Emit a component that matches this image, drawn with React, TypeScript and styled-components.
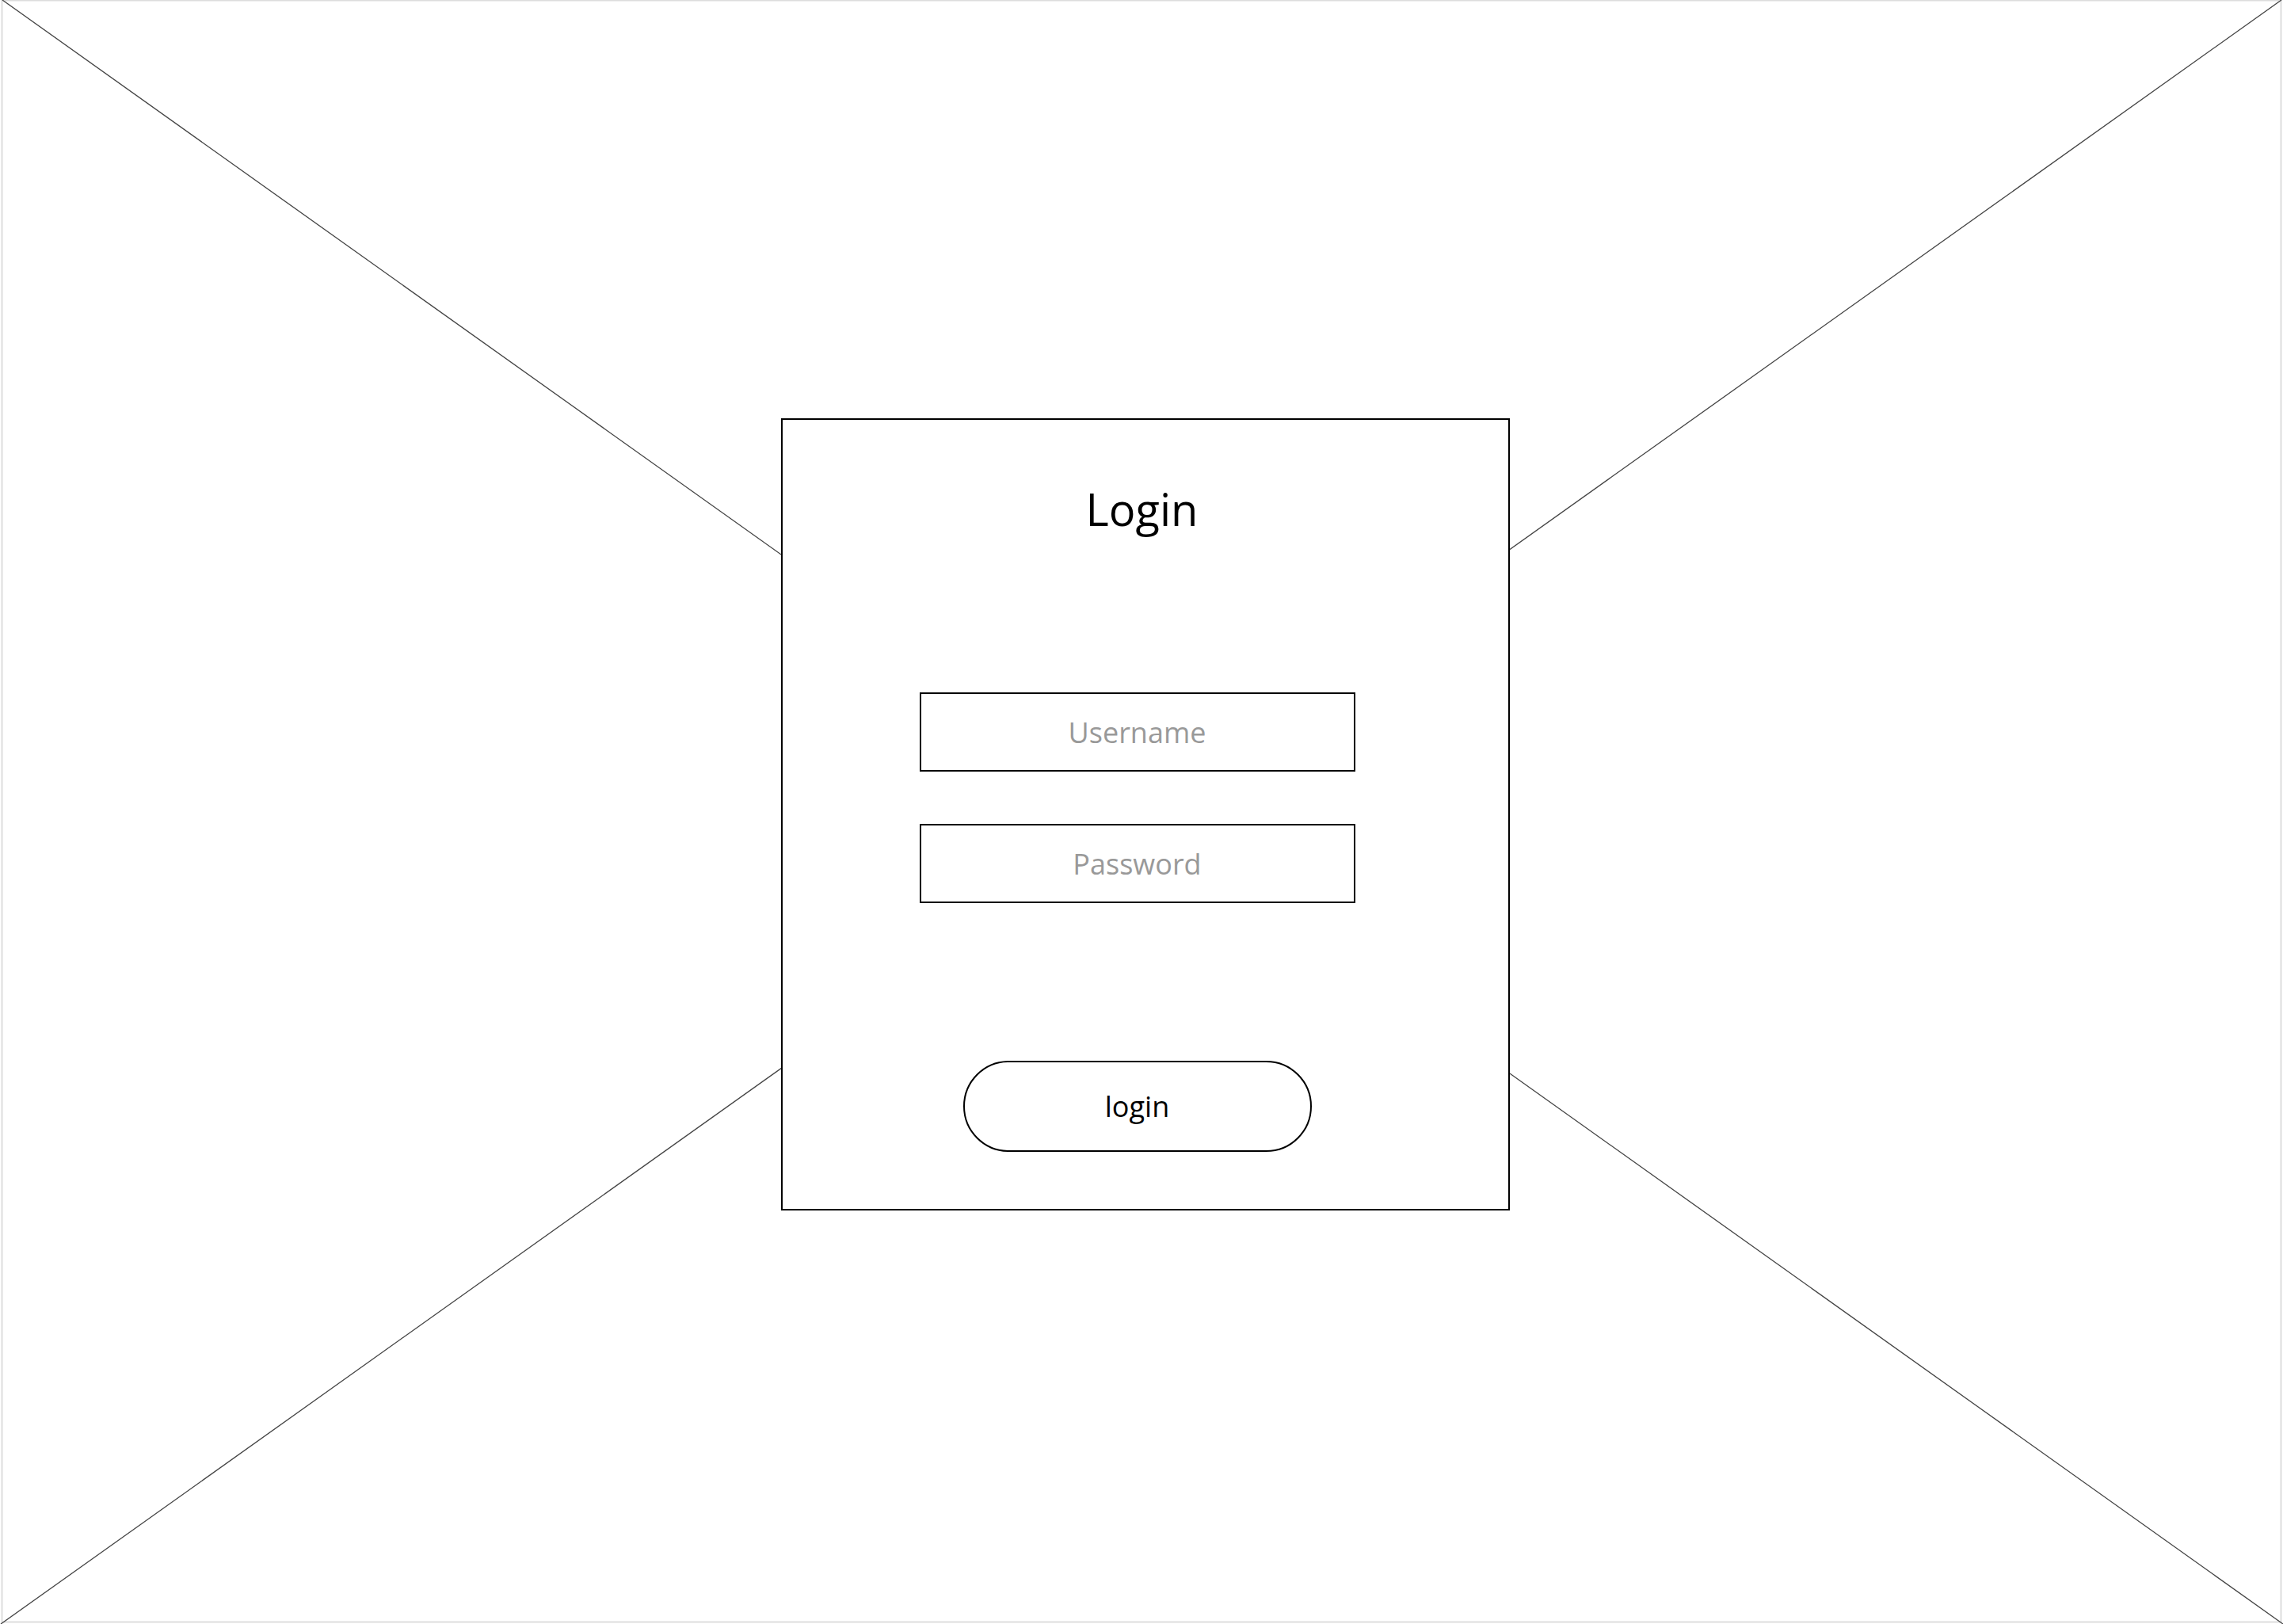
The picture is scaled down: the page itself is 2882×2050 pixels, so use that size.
import React from "react";
import styled, { createGlobalStyle } from "styled-components";

const GlobalStyle = createGlobalStyle`
  html, body {
    margin: 0;
    padding: 0;
    background: #ffffff;
  }
  body {
    font-family: "Open Sans", "Liberation Sans", sans-serif;
  }
  * { box-sizing: border-box; }
`;

const Stage = styled.div`
  position: relative;
  width: 2882px;
  height: 2050px;
  overflow: hidden;
  padding: 528px 0 0 986px;
`;

const Placeholder = styled.svg`
  position: absolute;
  left: 0;
  top: 0;
  width: 2882px;
  height: 2050px;
  pointer-events: none;
`;

const Card = styled.section`
  position: relative;
  width: 920px;
  height: 1000px;
  background: #ffffff;
  border: 2px solid #000000;
  display: flex;
  flex-direction: column;
  align-items: center;
  padding: 74px 21px 0 0;
`;

const Title = styled.h1`
  margin: 0 0 0 12px;
  font-family: "Open Sans", "Liberation Sans", sans-serif;
  font-weight: 400;
  font-size: 56px;
  line-height: 76px;
  color: #000000;
`;

const Field = styled.input<{ $gap: number }>`
  display: block;
  width: 550px;
  height: 100px;
  margin-top: ${(p) => p.$gap}px;
  border: 2px solid #000000;
  border-radius: 0;
  background: #ffffff;
  outline: none;
  padding: 0;
  text-align: center;
  font-family: "Open Sans", "Liberation Sans", sans-serif;
  font-size: 36px;
  color: #000000;
  &::placeholder {
    color: #999999;
    opacity: 1;
  }
`;

const LoginButton = styled.button`
  display: flex;
  align-items: center;
  justify-content: center;
  width: 440px;
  height: 115px;
  margin-top: 199px;
  border: 2px solid #000000;
  border-radius: 58px;
  background: #ffffff;
  padding: 0;
  font-family: "Open Sans", "Liberation Sans", sans-serif;
  font-size: 36px;
  line-height: 1;
  color: #000000;
  cursor: pointer;
`;

export default function App() {
  return (
    <>
      <GlobalStyle />
      <Stage>
        <Placeholder viewBox="0 0 2882 2050" xmlns="http://www.w3.org/2000/svg">
          <rect x="2.5" y="0.5" width="2877" height="2047" fill="none" stroke="#dddddd" strokeWidth="2" />
          <line x1="3" y1="0" x2="2882" y2="2050" stroke="#444444" strokeWidth="1.3" />
          <line x1="2880" y1="0" x2="1" y2="2050" stroke="#444444" strokeWidth="1.3" />
        </Placeholder>
        <Card>
          <Title>Login</Title>
          <Field $gap={194} type="text" placeholder="Username" />
          <Field $gap={66} type="password" placeholder="Password" />
          <LoginButton type="button">login</LoginButton>
        </Card>
      </Stage>
    </>
  );
}
